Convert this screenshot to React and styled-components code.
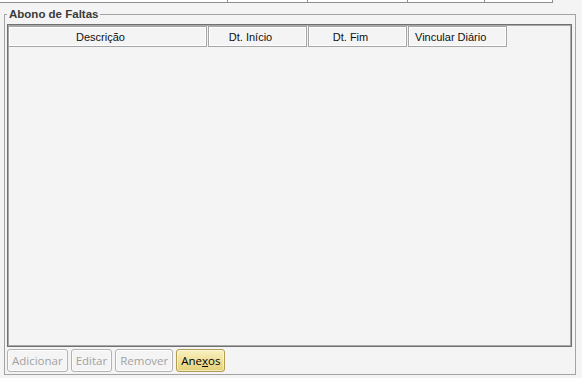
import styled, { createGlobalStyle } from "styled-components";

const GlobalStyle = createGlobalStyle`
  html, body {
    margin: 0;
    padding: 0;
    background: #f4f4f4;
    font-family: "Liberation Sans", Arial, sans-serif;
  }
`;

const Page = styled.div`
  width: 582px;
  height: 378px;
  overflow: hidden;
  background: #f4f4f4;
`;

const TopStrip = styled.div`
  display: grid;
  grid-template-columns: 228px 80px 100px 77px 67px;
  width: 552px;
  height: 2px;
  background: #ffffff;
  border-bottom: 1px solid #8e8e8e;
  border-right: 1px solid #8e8e8e;
`;

const StripCell = styled.div`
  border-right: ${({ $last }) => ($last ? "none" : "1px solid #8e8e8e")};
`;

const Group = styled.fieldset`
  margin: 4px 6px 0 4px;
  padding: 2px 3px 2px 2px;
  border: 1px solid #a3a3a3;
  height: 368px;
  box-sizing: border-box;
  display: flex;
  flex-direction: column;
  min-width: 0;
`;

const Legend = styled.legend`
  padding: 0 2px;
  font-size: 11.5px;
  font-weight: bold;
  color: #3a3a3a;
  line-height: 14px;
`;

const GridBox = styled.div`
  flex: 1;
  border: 1px solid #707070;
  box-shadow: inset 0 0 0 1px #a9a9a9;
  margin-top: 1px;
  background: #f4f4f4;
`;

const HeaderRow = styled.div`
  display: flex;
  gap: 1px;
  margin-top: 1px;
`;

const HeaderCell = styled.div`
  width: ${({ $w }) => $w}px;
  height: 21px;
  box-sizing: border-box;
  border: 1px solid #a6a6a6;
  box-shadow: inset 0 0 0 1px #ffffff;
  display: flex;
  align-items: center;
  justify-content: ${({ $left }) => ($left ? "flex-start" : "center")};
  padding: ${({ $left }) => ($left ? "0 0 0 6px" : "0 14px 0 0")};
  font-size: 11px;
  color: #111;
`;

const ButtonBar = styled.div`
  display: flex;
  gap: 3px;
  margin-top: 2px;
`;

const Button = styled.button`
  height: 23px;
  box-sizing: border-box;
  padding: 0 4px;
  border-radius: 3px;
  font-family: "Open Sans", "Liberation Sans", Arial, sans-serif;
  font-size: 11.5px;
  border: 1px solid ${({ $active }) => ($active ? "#b19d4f" : "#b3b3b3")};
  color: ${({ $active }) => ($active ? "#000" : "#a2a2a2")};
  background: ${({ $active }) =>
    $active
      ? "linear-gradient(to bottom, #f9f0bf 0%, #efe09a 50%, #e5d17a 100%)"
      : "#f4f4f4"};
  box-shadow: inset 0 0 0 1px
    ${({ $active }) => ($active ? "rgba(255,255,255,0.5)" : "#fbfbfb")};
  cursor: default;

  u {
    text-decoration: underline;
  }
`;

const columns = [
  { label: "Descrição", w: 199 },
  { label: "Dt. Início", w: 99 },
  { label: "Dt. Fim", w: 99 },
  { label: "Vincular Diário", w: 99 },
];

export default function App() {
  return (
    <Page>
      <GlobalStyle />
      <TopStrip>
        <StripCell />
        <StripCell />
        <StripCell />
        <StripCell />
        <StripCell $last />
      </TopStrip>
      <Group>
        <Legend>Abono de Faltas</Legend>
        <GridBox>
          <HeaderRow>
            {columns.map((c) => (
              <HeaderCell key={c.label} $w={c.w} $left={c.label === "Vincular Diário"}>
                {c.label}
              </HeaderCell>
            ))}
          </HeaderRow>
        </GridBox>
        <ButtonBar>
          <Button disabled>Adicionar</Button>
          <Button disabled>Editar</Button>
          <Button disabled>Remover</Button>
          <Button $active>
            Ane<u>x</u>os
          </Button>
        </ButtonBar>
      </Group>
    </Page>
  );
}
